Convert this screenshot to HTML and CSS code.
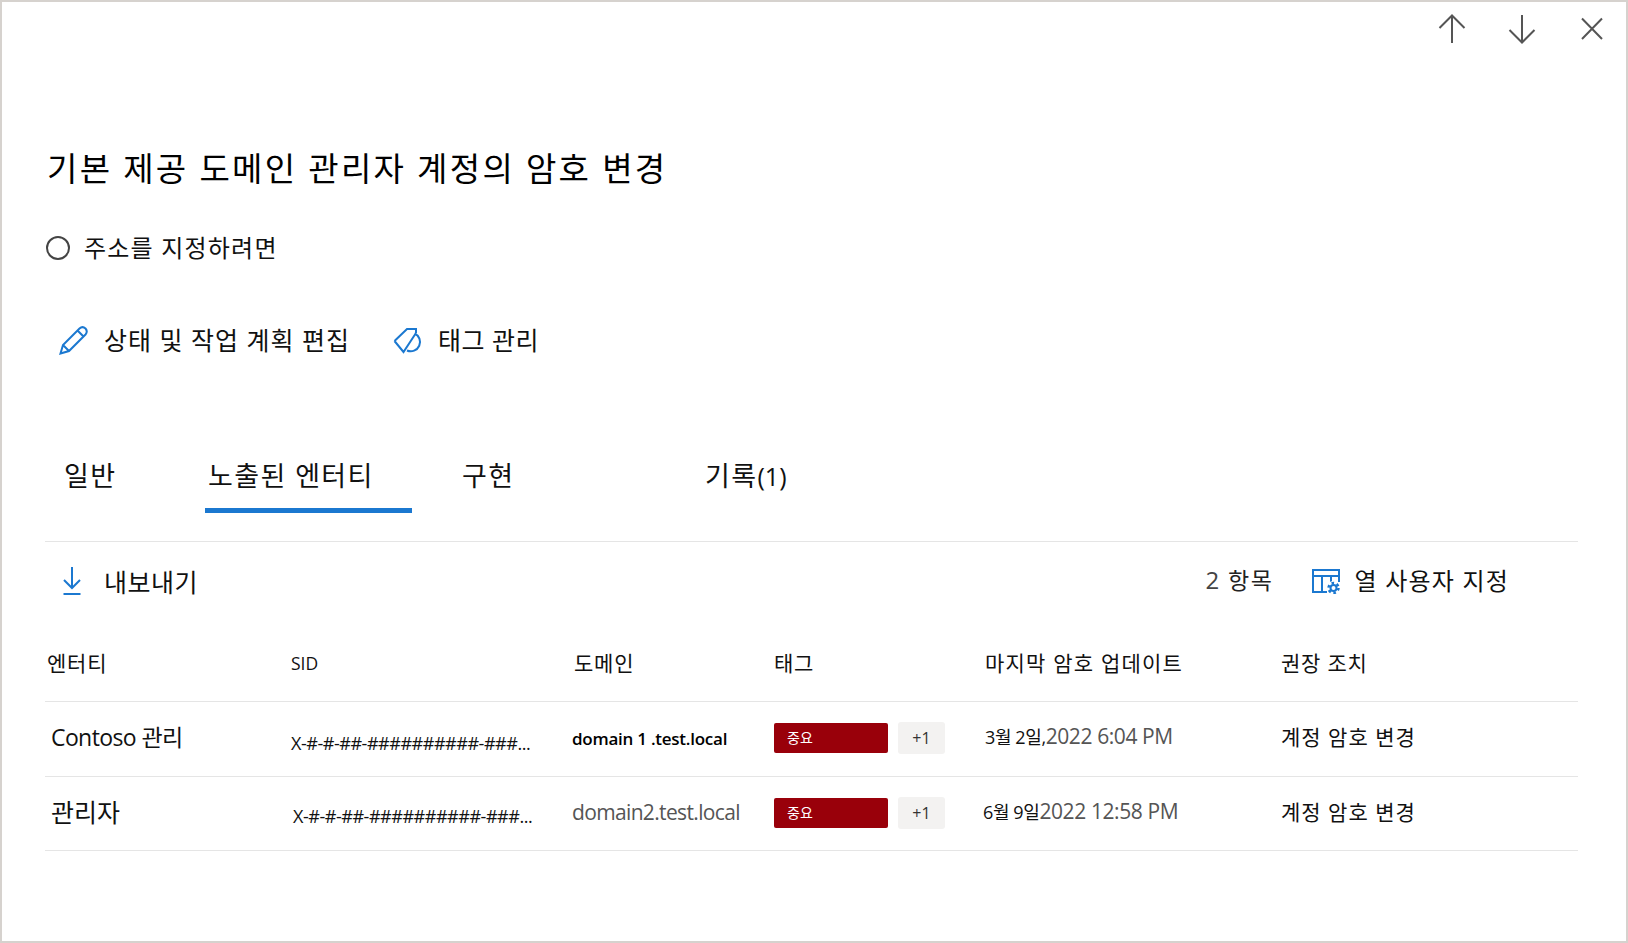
FILE: index.html
```html
<!DOCTYPE html>
<html lang="ko">
<head>
    <meta charset="UTF-8">
    <meta name="viewport" content="width=device-width, initial-scale=1.0">
    <title>기본 제공 도메인 관리자 계정의 암호 변경</title>
    <link rel="stylesheet" href="styles.css">
</head>
<body>
    <div class="panel">
        <div class="topbar">
            <svg class="nav-icon" viewBox="0 0 28 30"><path d="M14 1V29M1.500 14L14 1.500L26.500 14"/></svg>
            <svg class="nav-icon" viewBox="0 0 28 30"><path d="M14 1V29M1.500 16L14 28.500L26.500 16"/></svg>
            <svg class="nav-icon" viewBox="0 0 28 30"><path d="M4 4.500L24 25M24 4.500L4 25"/></svg>
        </div>

        <h1 class="title">기본 제공 도메인 관리자 계정의 암호 변경</h1>

        <div class="status">
            <span class="status-ring"></span>
            <span class="status-text">주소를 지정하려면</span>
        </div>

        <div class="actions">
            <div class="action">
                <svg class="blue-icon" width="30" height="30" viewBox="0 0 30 30"><path d="M1.500 28.500L4 20L20.500 3.500Q23.500 .8 26.500 3.500Q29 6.500 26.500 9.500L10 26ZM4 20L10 26M18.500 5.500L24.500 11.500"/></svg>
                <span class="action-text">상태 및 작업 계획 편집</span>
            </div>
            <div class="action action-tag">
                <svg class="blue-icon" width="30" height="28" viewBox="0 0 30 28"><path d="M1.500 15L14 3H23V7M23 7L10.500 26L1.500 15M21.500 7.500A9 9 0 1 1 14 24.500"/></svg>
                <span class="action-text">태그 관리</span>
            </div>
        </div>

        <div class="tabs">
            <div class="tab">일반</div>
            <div class="tab tab-active">노출된 엔터티</div>
            <div class="tab tab-third">구현</div>
            <div class="tab tab-last">기록<span class="tab-count">(1)</span></div>
        </div>

        <div class="toolbar">
            <div class="export">
                <svg class="blue-icon" width="20" height="30" viewBox="0 0 20 30"><path d="M10 1V22M2 14L10 22L18 14M1.500 28H18.500"/></svg>
                <span>내보내기</span>
            </div>
            <div class="toolbar-right">
                <span class="count"><span class="count-num">2</span> 항목</span>
                <div class="columns-btn">
                    <svg class="blue-icon" width="30" height="26" viewBox="0 0 30 26">
                        <path d="M16 24H2V2H28V14M2 8H28M11 8V24M20 8V14"/>
                        <circle class="gear-back" cx="22.500" cy="20" r="7"/>
                        <circle cx="22.500" cy="20" r="3"/>
                        <circle class="gear-teeth" cx="22.500" cy="20" r="5"/>
                    </svg>
                    <span class="columns-text">열 사용자 지정</span>
                </div>
            </div>
        </div>

        <div class="row row-head">
            <div class="head-first">엔터티</div>
            <div class="head-sid">SID</div>
            <div class="head-domain">도메인</div>
            <div>태그</div>
            <div class="head-date">마지막 암호 업데이트</div>
            <div>권장 조치</div>
        </div>

        <div class="row">
            <div class="entity">Contoso 관리</div>
            <div class="sid">X-#-#-##-##########-###...</div>
            <div class="domain-strong">domain 1 .test.local</div>
            <div class="tags">
                <span class="tag-red">중요</span>
                <span class="tag-more">+1</span>
            </div>
            <div class="date date-first"><span class="date-day">3월 2일,</span>2022 6:04 PM</div>
            <div class="remedy">계정 암호 변경</div>
        </div>

        <div class="row row-short">
            <div class="entity entity-korean">관리자</div>
            <div class="sid sid-second">X-#-#-##-##########-###...</div>
            <div class="domain-muted">domain2.test.local</div>
            <div class="tags">
                <span class="tag-red">중요</span>
                <span class="tag-more">+1</span>
            </div>
            <div class="date"><span class="date-day">6월 9일</span>2022 12:58 PM</div>
            <div class="remedy">계정 암호 변경</div>
        </div>
    </div>
</body>
</html>
```

FILE: styles.css
```css
* {
    margin: 0;
    padding: 0;
    box-sizing: border-box;
}

body {
    font-family: 'Open Sans', 'Noto Sans CJK KR', sans-serif;
    background: white;
    color: #111;
}

.panel {
    height: 100vh;
    border: 2px solid #d6d2ce;
    padding: 0 48px 0 43px;
    overflow: hidden;
}

.topbar {
    display: flex;
    justify-content: flex-end;
    gap: 42px;
    height: 42px;
    padding-top: 12px;
    margin-right: -28px;
}

.nav-icon {
    width: 28px;
    height: 30px;
    fill: none;
    stroke: #555;
    stroke-width: 2;
}

.blue-icon {
    fill: none;
    stroke: #1b78d0;
    stroke-width: 2;
    flex-shrink: 0;
}

.gear-back {
    fill: white;
    stroke: none;
}

.gear-teeth {
    stroke-width: 2.500;
    stroke-dasharray: 2.600 2.640;
}

.title {
    margin: 103px 0 0 2px;
    font-size: 33px;
    font-weight: 400;
    line-height: 44px;
    letter-spacing: 2.300px;
    color: #000;
}

.status {
    display: flex;
    align-items: center;
    gap: 14px;
    margin: 42px 0 0 1px;
    height: 30px;
    font-size: 24px;
    letter-spacing: 1.200px;
}

.status-ring {
    width: 24px;
    height: 24px;
    border: 2px solid #444;
    border-radius: 50%;
}

.status-text {
    padding-bottom: 4px;
}

.actions {
    display: flex;
    margin-top: 57px;
    height: 40px;
    padding-left: 14px;
    font-size: 25px;
    letter-spacing: 1px;
}

.action {
    display: flex;
    align-items: center;
    gap: 15px;
}

.action-text {
    padding-bottom: 2px;
}

.action-tag {
    margin-left: 43px;
    gap: 15px;
    letter-spacing: .5px;
}

.tabs {
    display: grid;
    grid-template-columns: 160px 207px 293px 1fr;
    margin-top: 96px;
    padding-bottom: 28px;
    border-bottom: 1px solid #e5e5e5;
    font-size: 27px;
    letter-spacing: 1.400px;
}

.tab {
    height: 57px;
    line-height: 40px;
    padding-left: 19px;
    border-bottom: 5px solid transparent;
}

.tab-active {
    padding-left: 3px;
    border-bottom-color: #1b78d0;
}

.tab-third {
    padding-left: 50px;
}

.tab-last {
    padding-left: 0;
}

.tab-count {
    font-size: 25px;
    letter-spacing: 0;
}

.toolbar {
    display: flex;
    justify-content: space-between;
    align-items: center;
    height: 78px;
    font-size: 25px;
    letter-spacing: .5px;
}

.export {
    display: flex;
    align-items: center;
    gap: 22px;
    padding-left: 17px;
}

.toolbar-right {
    display: flex;
    align-items: center;
    padding-right: 69px;
}

.count {
    padding-bottom: 4px;
    font-size: 23px;
    letter-spacing: 1.500px;
    color: #222;
}

.count-num {
    font-size: 24px;
    color: #444;
}

.columns-btn {
    display: flex;
    align-items: center;
    gap: 13px;
    margin-left: 38px;
}

.columns-text {
    padding-bottom: 4px;
    font-size: 24px;
    letter-spacing: 1.200px;
}

.row {
    display: grid;
    grid-template-columns: 246px 281px 202px 209px 298px 1fr;
    align-items: center;
    height: 75px;
    padding-bottom: 2px;
    border-bottom: 1px solid #e5e5e5;
    font-size: 20px;
}

.row-head {
    height: 82px;
    padding-top: 2px;
    padding-bottom: 0;
    font-size: 21px;
    letter-spacing: .8px;
}

.row-short {
    height: 74px;
}

.head-first {
    padding-left: 2px;
}

.head-sid {
    padding-top: 2px;
    font-size: 17.500px;
    letter-spacing: 0;
}

.head-domain {
    padding-left: 2px;
}

.head-date {
    padding-left: 2px;
    letter-spacing: 1.200px;
}

.entity {
    padding-left: 6px;
    padding-bottom: 4px;
    font-size: 23px;
    letter-spacing: -.6px;
}

.entity-korean {
    font-size: 25px;
    letter-spacing: 0;
}

.sid {
    padding-top: 10px;
    font-size: 18px;
    letter-spacing: -.46px;
}

.sid-second {
    padding-left: 2px;
    padding-top: 6px;
}

.domain-strong {
    font-size: 17px;
    font-weight: 600;
    letter-spacing: -.25px;
    color: #000;
}

.domain-muted {
    padding-bottom: 2px;
    font-size: 21px;
    letter-spacing: -.65px;
    color: #555;
}

.tags {
    display: flex;
    align-items: center;
    gap: 10px;
}

.tag-red {
    width: 114px;
    height: 30px;
    padding-left: 13px;
    line-height: 30px;
    border-radius: 2px;
    background: #99000a;
    color: white;
    font-size: 14px;
}

.tag-more {
    width: 47px;
    height: 32px;
    line-height: 32px;
    text-align: center;
    border-radius: 3px;
    background: #f3f2f1;
    color: #333;
    font-size: 16px;
}

.date {
    padding-bottom: 4px;
    font-size: 21px;
    letter-spacing: -.4px;
    color: #555;
}

.date-first {
    padding-left: 2px;
}

.date-day {
    font-size: 18px;
    color: #111;
}

.remedy {
    padding-bottom: 4px;
    font-size: 21px;
    letter-spacing: 1px;
}
```
